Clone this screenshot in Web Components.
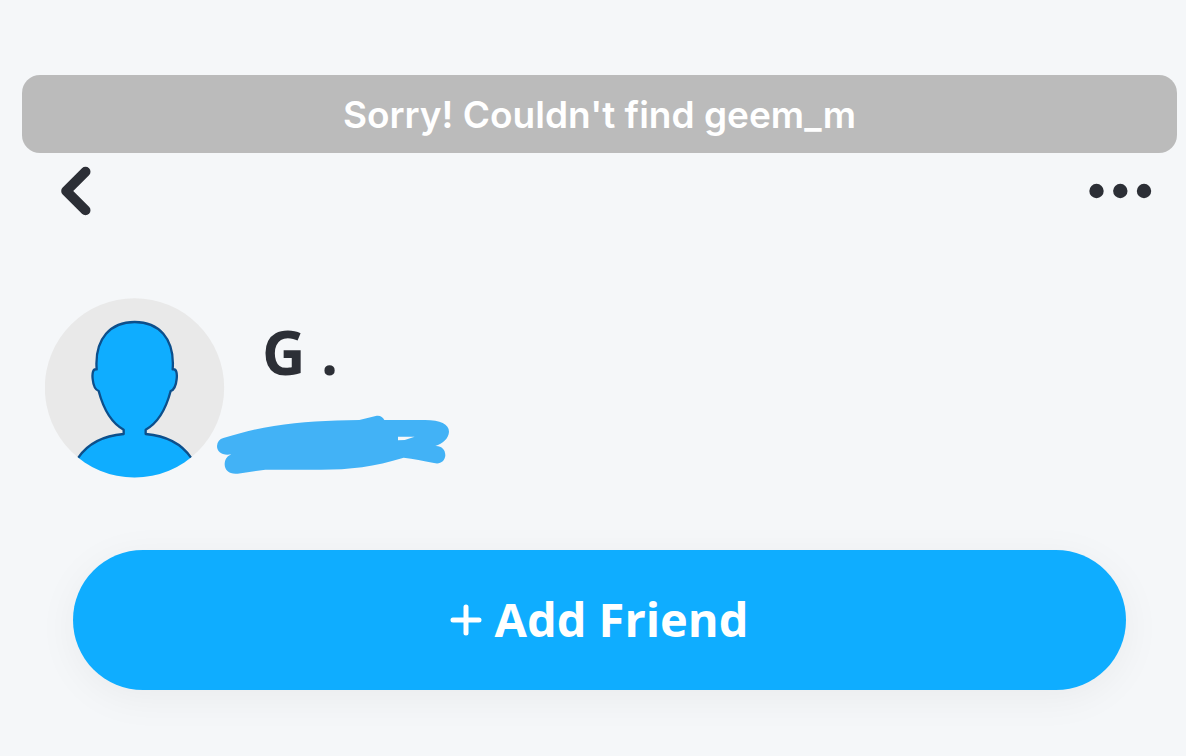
<!DOCTYPE html>
<html lang="en">
<head>
<meta charset="utf-8">
<meta name="viewport" content="width=device-width, initial-scale=1">
<title>Profile</title>
<style>
  html { background: #f5f7f9; }
  body { margin: 0; color: #2c2f36; font-family: "Open Sans", "Noto Sans", sans-serif; }
</style>
</head>
<body>
<profile-page></profile-page>

<template id="profile-page">
  <style>
    :host { display: block; padding: 75px 0 66px; }
    toast-message { margin: 0 9px 0 22px; }
    nav-bar { padding: 0 24px 0 48px; }
    profile-header { margin: 69px 45px 0; }
    add-button { margin: 72px 60px 0 73px; }
  </style>
  <toast-message>Sorry! Couldn't find geem_m</toast-message>
  <nav-bar></nav-bar>
  <profile-header><span>G .</span></profile-header>
  <add-button>Add Friend</add-button>
</template>

<template id="toast-message">
  <style>
    :host { display: block; }
    div {
      padding: 17px 16px 15px; border-radius: 18px; background: #bbb; color: #fff;
      font: 600 37px/46px Inter, "Liberation Sans", sans-serif; text-align: center;
    }
  </style>
  <div role="status"><slot></slot></div>
</template>

<template id="nav-bar">
  <style>
    :host { display: flex; justify-content: space-between; align-items: center; height: 76px; }
    button { display: flex; padding: 8px 10px; border: 0; background: none; color: inherit; }
    svg { display: block; }
  </style>
  <button type="button" aria-label="Back">
    <svg width="36" height="52" viewBox="0 0 36 52" fill="none" stroke="currentColor" stroke-width="10" stroke-linecap="round" stroke-linejoin="round"><path d="M27.500 6.700 8.200 26l19.300 19.300"/></svg>
  </button>
  <button type="button" aria-label="More options">
    <svg width="64" height="16" viewBox="0 0 64 16" fill="currentColor"><circle cx="8.500" cy="8" r="7.200"/><circle cx="32.300" cy="8" r="7.200"/><circle cx="56" cy="8" r="7.200"/></svg>
  </button>
</template>

<template id="profile-header">
  <style>
    :host { display: flex; align-items: flex-start; gap: 37px; }
    svg { display: block; flex: none; }
    h1 { margin: 18px 0 0; font-size: 60px; line-height: 72px; font-weight: 700; }
    .mark { margin: 27px 0 0 -45px; }
  </style>
  <svg width="180" height="180" viewBox="45 39 540 540" role="img" aria-label="Avatar">
    <clipPath id="disc"><circle cx="313.500" cy="308.500" r="269"/></clipPath>
    <g clip-path="url(#disc)">
      <rect x="43" y="38" width="542" height="542" fill="#e9e9e9"/>
      <path fill="#0fadff" stroke="#0d4f8b" stroke-width="7" stroke-linejoin="round"
        d="M200 253C193 158 244 111 314 111S435 158 428 253C439 250 442 264 440 282C438 302 431 315 422 318C409 367 389 411 347 434V447C403 452 454 475 483 518L530 600H98L145 518C174 475 223 452 281 447V434C239 411 219 367 206 318C197 315 190 302 188 282C186 264 189 250 200 253Z"/>
    </g>
  </svg>
  <div>
    <h1><slot></slot></h1>
    <svg class="mark" width="232" height="59" viewBox="36 315 696 177" aria-hidden="true">
      <path fill="#42b2f6" fill-rule="evenodd"
        d="M55 384C102 372 152 355 207 348C290 335 368 331 463 330L512 318C525 315 533 321 538 330H655C704 329 732 342 732 365C731 386 713 400 691 408C710 407 721 419 721 436C720 454 705 464 687 459C654 452 626 446 596 443C509 470 433 479 348 479H181L98 491C73 494 58 480 59 461C60 446 68 438 79 433C53 438 36 427 36 408C37 395 44 387 55 384ZM579 380V391Q604 391 629 380Z"/>
    </svg>
  </div>
</template>

<template id="add-button">
  <style>
    :host { display: block; }
    button {
      display: flex; justify-content: center; align-items: center; gap: 12px;
      width: 100%; padding: 39px 40px 41px; border: 0; border-radius: 70px;
      background: #0fadff; color: #fff; box-shadow: 0 8px 40px rgba(0, 0, 0, .05);
      font: 700 47px/60px "Open Sans", "Noto Sans", sans-serif;
    }
    svg { display: block; flex: none; }
  </style>
  <button type="button">
    <svg width="32" height="34" viewBox="0 0 32 34" fill="none" stroke="currentColor" stroke-width="5" stroke-linecap="round" aria-hidden="true"><path d="M3 18h26M16 5v26"/></svg>
    <slot></slot>
  </button>
</template>

<script>
  for (const name of ["toast-message", "nav-bar", "profile-header", "add-button", "profile-page"]) {
    customElements.define(name, class extends HTMLElement {
      constructor() {
        super();
        this.attachShadow({ mode: "open" })
          .append(document.getElementById(name).content.cloneNode(true));
      }
    });
  }
</script>
</body>
</html>
